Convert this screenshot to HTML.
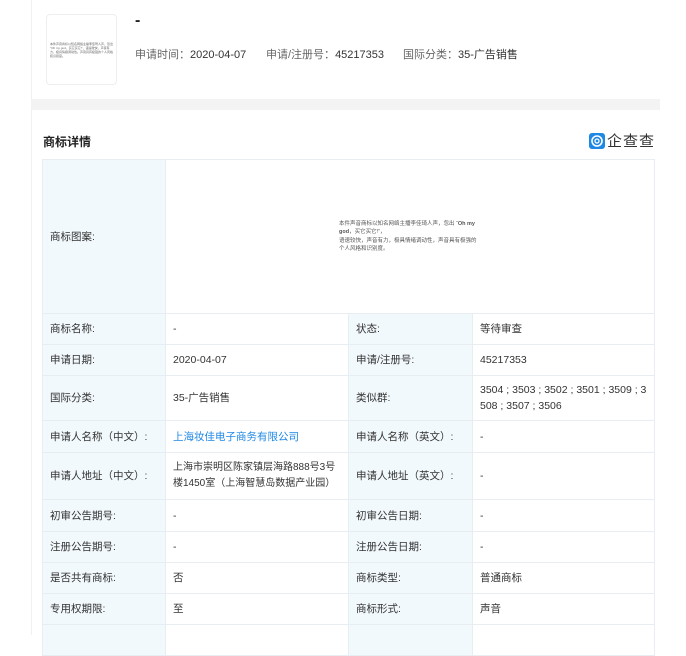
<!DOCTYPE html>
<html><head><meta charset="utf-8">
<style>
*{margin:0;padding:0;box-sizing:border-box}
body{width:686px;height:635px;overflow:hidden;background:#fff;font-family:"Liberation Sans","Noto Sans CJK SC",sans-serif;color:#333;font-size:11px;position:relative}
.card1{position:absolute;left:31px;top:0;width:629px;height:99px;background:#fff;border-left:1px solid #f0f0f0}
.band{position:absolute;left:31px;top:99px;width:629px;height:11px;background:#f3f3f3}
.card2{position:absolute;left:31px;top:110px;width:629px;height:525px;background:#fff;border-left:1px solid #f0f0f0}
.thumb{position:absolute;left:46px;top:14px;width:71px;height:71px;border:1px solid #eee;border-radius:4px;background:#fff}
.thumb div{position:absolute;left:3px;top:27px;font-size:3px;line-height:4px;color:#666;width:64px}
.dash{position:absolute;left:135px;top:12px;font-size:16px;font-weight:bold;color:#222}
.meta{position:absolute;top:46px;font-size:11px;color:#666}
.meta b{font-weight:normal;color:#333}
.title{position:absolute;left:43px;top:133px;font-size:12px;font-weight:bold;color:#222}
.logo{position:absolute;left:589px;top:130px;font-size:15px;color:#333;display:flex;align-items:center;letter-spacing:1px}
.logo i{display:inline-block;width:16px;height:16px;background:#1e88e5;border-radius:3px;margin-right:2px;position:relative}
table{position:absolute;left:42px;top:159px;width:612px;border-collapse:collapse;table-layout:fixed}
td{border:1px solid #e8edf2;font-size:10.5px;padding:0 7px;vertical-align:middle;line-height:16px}
td.l{background:#f2f9fc;color:#333}
a{color:#1e88e5;text-decoration:none}
</style></head><body>
<div class="card1"></div><div class="band"></div><div class="card2"></div>
<div class="thumb"><div>本件声音商标以知名网络主播李佳琦人声，忽出 "Oh my god，买它买它!"，语速较快，声音有力，极具情绪调动性。声音具有极强的个人风格和识别度。</div></div>
<div class="dash">-</div>
<div class="meta" style="left:135px">申请时间：<b>2020-04-07</b></div>
<div class="meta" style="left:266px">申请/注册号：<b>45217353</b></div>
<div class="meta" style="left:403px">国际分类：<b>35-广告销售</b></div>
<div class="title">商标详情</div>
<div class="logo"><i><svg width="16" height="16" viewBox="0 0 16 16"><circle cx="8" cy="8" r="5" fill="none" stroke="#fff" stroke-width="1.6"/><circle cx="8" cy="8" r="2" fill="none" stroke="#fff" stroke-width="1.3"/></svg></i>企查查</div>
<table>
<colgroup><col style="width:123px"><col style="width:183px"><col style="width:124px"><col style="width:182px"></colgroup>
<tr style="height:154px"><td class="l">商标图案:</td><td colspan="3" style="padding:0">
<div style="margin-left:173px;font-size:5.5px;line-height:8.5px;color:#555;width:140px">本件声音商标以知名网络主播李佳琦人声，忽出 “<b>Oh my god</b>，买它买它!”，<br>语速较快，声音有力，极具情绪调动性，声音具有极强的个人风格和识别度。</div></td></tr>
<tr style="height:31px"><td class="l">商标名称:</td><td>-</td><td class="l">状态:</td><td>等待审查</td></tr>
<tr style="height:31px"><td class="l">申请日期:</td><td>2020-04-07</td><td class="l">申请/注册号:</td><td>45217353</td></tr>
<tr style="height:45px"><td class="l">国际分类:</td><td>35-广告销售</td><td class="l">类似群:</td><td style="word-break:break-all">3504 ; 3503 ; 3502 ; 3501 ; 3509 ; 3508 ; 3507 ; 3506</td></tr>
<tr style="height:32px"><td class="l">申请人名称（中文）:</td><td><a>上海妆佳电子商务有限公司</a></td><td class="l">申请人名称（英文）:</td><td>-</td></tr>
<tr style="height:47px"><td class="l">申请人地址（中文）:</td><td style="font-size:10px;padding-right:3px;word-break:break-all">上海市崇明区陈家镇层海路888号3号楼1450室（上海智慧岛数据产业园）</td><td class="l">申请人地址（英文）:</td><td>-</td></tr>
<tr style="height:32px"><td class="l">初审公告期号:</td><td>-</td><td class="l">初审公告日期:</td><td>-</td></tr>
<tr style="height:31px"><td class="l">注册公告期号:</td><td>-</td><td class="l">注册公告日期:</td><td>-</td></tr>
<tr style="height:31px"><td class="l">是否共有商标:</td><td>否</td><td class="l">商标类型:</td><td>普通商标</td></tr>
<tr style="height:31px"><td class="l">专用权期限:</td><td>至</td><td class="l">商标形式:</td><td>声音</td></tr>
<tr style="height:31px"><td class="l"></td><td></td><td class="l"></td><td></td></tr>
</table>
</body></html>
